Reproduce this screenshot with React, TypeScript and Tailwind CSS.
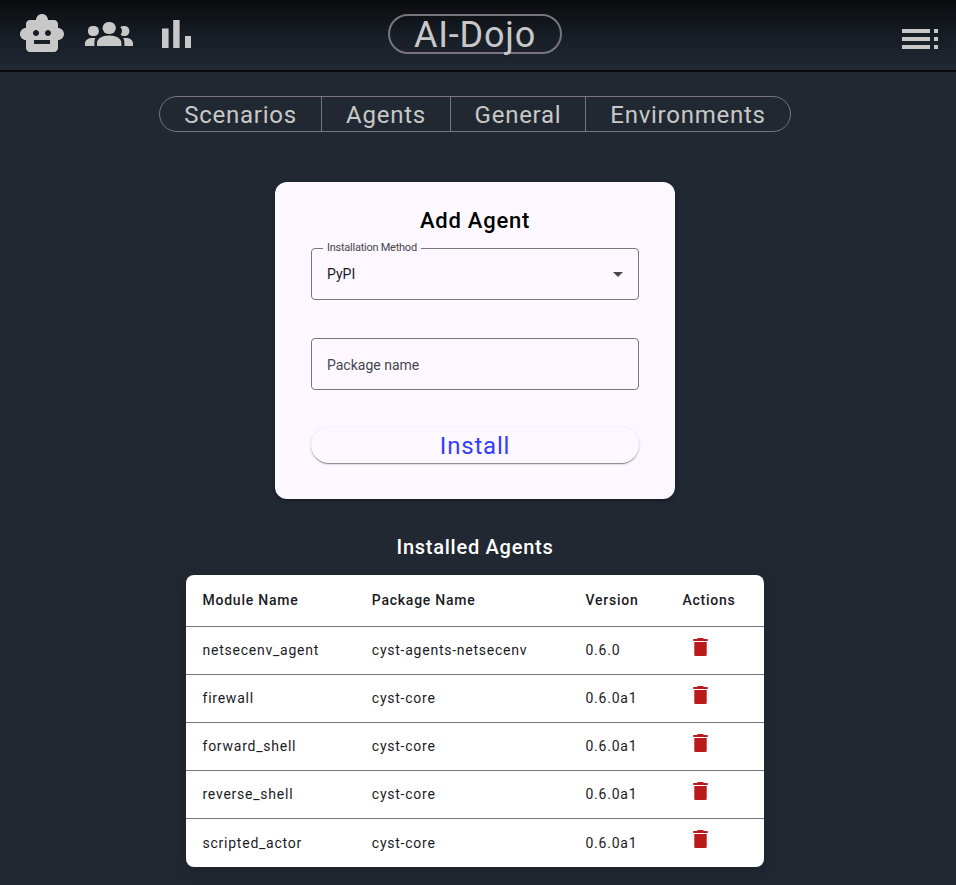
import { MdSmartToy, MdToc, MdArrowDropDown } from "react-icons/md";

const tabs = [
  { label: "Scenarios", box: "w-[161px]" },
  { label: "Agents", box: "w-[129px] border-l" },
  { label: "General", box: "w-[135px] border-l" },
  { label: "Environments", box: "w-[205px] border-l" },
];

const agents = [
  ["netsecenv_agent", "cyst-agents-netsecenv", "0.6.0"],
  ["firewall", "cyst-core", "0.6.0a1"],
  ["forward_shell", "cyst-core", "0.6.0a1"],
  ["reverse_shell", "cyst-core", "0.6.0a1"],
  ["scripted_actor", "cyst-core", "0.6.0a1"],
];

const columns = "grid grid-cols-[169.3px_213.7px_97px_1fr] pl-[16.5px]";

function GroupsIcon() {
  return (
    <svg viewBox="0 0 24 24" className="ml-[19px] size-12 fill-current">
      <rect x="1.5" y="8" width="5.4" height="5" rx="2.3" />
      <rect x="8.8" y="6" width="6.6" height="6" rx="2.9" />
      <path d="M17.6 8.5Q18.4 8 19.6 8C21.3 8 22.2 9 22.2 10.5S21.3 13 19.7 13C18.8 13 18.2 12.7 17.8 12.2Q18.6 11.3 18.5 10.2Q18.4 9.1 17.6 8.5z" />
      <path d="M6 18v-1.5c0-2.2 2.6-3.7 6.1-3.7s6.1 1.5 6.1 3.7V18z" />
      <path d="M0 18v-1.2C0 15 1.6 14 4 14h1.2C4.8 14.7 4.7 15.4 4.7 16.3V18z" />
      <path d="M24 18v-1.2C24 15 22.4 14 20.4 14H19c.5.7.7 1.4.7 2.3V18z" />
    </svg>
  );
}

function BarChartIcon() {
  return (
    <svg viewBox="0 0 24 24" className="ml-[19px] size-12 fill-current">
      <path d="M5 9.2h3.3V19H5zM10.6 5h3.2v14h-3.2zm5.9 8h3v6h-3z" />
    </svg>
  );
}

function DeleteIcon() {
  return (
    <svg viewBox="0 0 24 24" className="mt-2 ml-[6px] size-6 self-start fill-[#ba1a1a]">
      <path d="M6.3 19.7c0 .7.6 1.3 1.3 1.3h9.8c.7 0 1.3-.6 1.3-1.3V7H6.3zM19.7 4h-3.8l-1-1h-5l-1 1H5.2v2h14.5z" />
    </svg>
  );
}

function Header() {
  return (
    <header className="flex h-[72px] items-start justify-between border-b-2 border-[#08090b] bg-linear-to-b from-[#0b0b0e] via-[#161d25] to-[#212832] text-[#c8c8c8]">
      <nav className="flex w-[388px] pt-2.5 pl-[18px]">
        <MdSmartToy className="size-12" />
        <GroupsIcon />
        <BarChartIcon />
      </nav>
      <h1 className="mt-3.5 flex h-10 w-[174px] items-center justify-center rounded-full border-2 border-[#79747e] pt-[2px] text-[36px] leading-10 tracking-[0.8px]">
        AI-Dojo
      </h1>
      <div className="flex w-[394px] justify-end pt-[15px] pr-3">
        <MdToc className="size-12" />
      </div>
    </header>
  );
}

function AddAgentCard() {
  return (
    <section className="mt-[50px] flex h-[317px] w-[400px] flex-col rounded-xl bg-[#fdf8ff] px-9 pt-[25px] shadow-[0_2px_4px_rgba(0,0,0,0.3)]">
      <h2 className="text-center text-[22px] leading-7 font-medium tracking-[0.75px] text-black">Add Agent</h2>
      <div className="relative mt-[13px] flex h-[52px] shrink-0 items-center justify-between rounded border border-[#777680] pr-2 pl-[15px]">
        <span className="absolute -top-[9px] left-[11px] bg-[#fdf8ff] px-1 text-[11px] leading-4 tracking-[-0.25px] text-[#46464f]">
          Installation Method
        </span>
        <span className="text-[14px] leading-5 text-[#1b1b1f]">PyPI</span>
        <MdArrowDropDown className="size-6 text-[#46464f]" />
      </div>
      <div className="mt-[38px] flex h-[52px] shrink-0 items-center rounded border border-[#777680] pt-px pl-[15px] text-[14px] leading-5 text-[#46464f]">
        Package name
      </div>
      <button className="mt-[37px] h-9 shrink-0 rounded-full bg-[#fdf8ff] pt-[2px] text-[24px] leading-[34px] tracking-[0.8px] text-[#343dff] shadow-[0_2px_1px_-1px_rgba(0,0,0,0.25),0_1px_1px_rgba(0,0,0,0.18),0_1px_3px_rgba(0,0,0,0.16)]">
        Install
      </button>
    </section>
  );
}

function AgentsTable() {
  return (
    <div className="mt-[14px] w-[578px] overflow-hidden rounded-lg bg-white text-[14px] leading-5 tracking-[0.76px] text-[#1b1b1f] shadow-[0_5px_15px_rgba(0,0,0,0.15)]">
      <div className={`${columns} h-[52px] items-center border-b border-[#777680] pb-px font-medium`}>
        <span>Module Name</span>
        <span>Package Name</span>
        <span>Version</span>
        <span>Actions</span>
      </div>
      {agents.map(([name, pkg, version]) => (
        <div key={name} className={`${columns} h-12 items-center border-b border-[#777680] pb-px last:border-b-0 last:pb-0`}>
          <span>{name}</span>
          <span>{pkg}</span>
          <span>{version}</span>
          <DeleteIcon />
        </div>
      ))}
    </div>
  );
}

export default function App() {
  return (
    <div className="h-[885px] w-[956px] overflow-hidden bg-[#212832] font-[Roboto,sans-serif]">
      <Header />
      <main className="flex flex-col items-center pr-[6px]">
        <div className="mt-6 flex h-9 overflow-hidden rounded-full border border-[#79747e] text-[24px] leading-[34px] tracking-[0.75px] text-[#c8c8c8]">
          {tabs.map((tab) => (
            <button key={tab.label} className={`${tab.box} border-[#79747e] pt-px text-center`}>
              {tab.label}
            </button>
          ))}
        </div>
        <AddAgentCard />
        <h2 className="mt-[34px] text-[20px] leading-7 font-medium tracking-[0.74px] text-white">Installed Agents</h2>
        <AgentsTable />
      </main>
    </div>
  );
}
